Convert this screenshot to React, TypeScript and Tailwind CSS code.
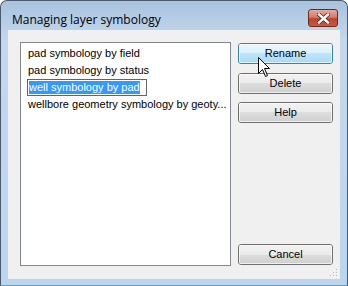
import React from "react";

const lf = { fontFamily: '"Liberation Sans", Arial, sans-serif', fontSize: 11 };

function Btn({ label, hover }: { label: string; hover?: boolean }) {
  return (
    <div
      className={
        "relative w-[95px] h-[21px] rounded-[3px] border flex items-center justify-center text-black overflow-hidden " +
        (hover ? "border-[#3c7fb1]" : "border-[#707070]")
      }
    >
      <div
        className={
          "absolute inset-0 " +
          (hover
            ? "bg-[linear-gradient(#eaf6fd_0%,#d9f0fc_50%,#bee6fd_50%,#a7d9f5_100%)]"
            : "bg-[linear-gradient(#f2f2f2_0%,#ebebeb_50%,#dddddd_50%,#cfcfcf_100%)]")
        }
      />
      <div className="absolute inset-0 rounded-[2px] border border-[#fcfcfc]/70" />
      <span className="relative" style={lf}>
        {label}
      </span>
    </div>
  );
}

export default function App() {
  return (
    <div className="w-[348px] h-[286px] bg-white">
      <div className="w-[348px] h-[286px] rounded-t-[7px] border border-[#4a5a6e] border-b-[#2fb4d6] bg-[linear-gradient(#a9c3dd,#c3d8ee_40px,#bcd5ee)] flex flex-col">
        <div className="h-[29px] flex items-start pl-[11px] pr-[9px] justify-between shrink-0">
          <span className="text-[12px] leading-[16px] text-black mt-[11px]" style={{ fontFamily: '"Open Sans", "Noto Sans", sans-serif' }}>
            Managing layer symbology
          </span>
          <div className="w-[30px] h-[18px] mt-[8px] rounded-[3px] border border-[#6d2a22] bg-[linear-gradient(#e9a99b_0%,#d47c6a_45%,#c0412c_55%,#c95a43_100%)] flex items-center justify-center">
            <svg width="13" height="11" viewBox="0 0 13 11">
              <path d="M2 1.5 L11 9.5 M11 1.5 L2 9.5" stroke="#5a2a22" strokeWidth="4" strokeLinecap="square" />
              <path d="M2 1.5 L11 9.5 M11 1.5 L2 9.5" stroke="#ffffff" strokeWidth="2.4" strokeLinecap="square" />
            </svg>
          </div>
        </div>
        <div className="mx-[7px] mb-[6px] flex-1 bg-[#f0f0f0] relative flex flex-row pl-[12px] pt-[12px]">
          <div className="w-[211px] h-[224px] bg-white border border-[#828790] pt-[2px] text-black">
            <div className="h-[17px] pl-[7px] flex items-center whitespace-nowrap" style={lf}>pad symbology by field</div>
            <div className="h-[17px] pl-[7px] flex items-center whitespace-nowrap" style={lf}>pad symbology by status</div>
            <div className="h-[17px] pl-[6px] flex items-center">
              <div className="w-[120px] h-[17px] border border-[#646464] bg-white pl-[1px] flex items-center">
                <span className="bg-[#3399ff] text-white h-[13px] leading-[13px] whitespace-nowrap" style={lf}>
                  well symbology by pad
                </span>
              </div>
            </div>
            <div className="h-[17px] pl-[7px] flex items-center whitespace-nowrap" style={lf}>wellbore geometry symbology by geoty...</div>
          </div>
          <div className="ml-[7px] flex flex-col pt-[1px]">
            <Btn label="Rename" hover />
            <div className="h-[9px]" />
            <Btn label="Delete" />
            <div className="h-[8px]" />
            <Btn label="Help" />
            <div className="flex-1" />
            <div className="mb-[14px]">
              <Btn label="Cancel" />
            </div>
          </div>
          <svg className="absolute right-[2px] bottom-[2px]" width="10" height="10" viewBox="0 0 10 10">
            {[[8, 2], [8, 5], [8, 8], [5, 5], [5, 8], [2, 8]].map(([x, y], i) => (
              <g key={i}>
                <rect x={x} y={y} width="1" height="1" fill="#b8b8b8" />
                <rect x={x + 1} y={y + 1} width="1" height="1" fill="#ffffff" />
              </g>
            ))}
          </svg>
          <svg className="absolute left-[250px] top-[27px]" width="13" height="21" viewBox="0 0 13 21">
            <path d="M0.5 0.5 L0.5 16.5 L4.5 12.5 L7.5 19.5 L9.5 18.5 L6.5 11.5 L11.5 11.5 Z" fill="#ffffff" stroke="#000000" strokeWidth="1" />
          </svg>
        </div>
      </div>
    </div>
  );
}
